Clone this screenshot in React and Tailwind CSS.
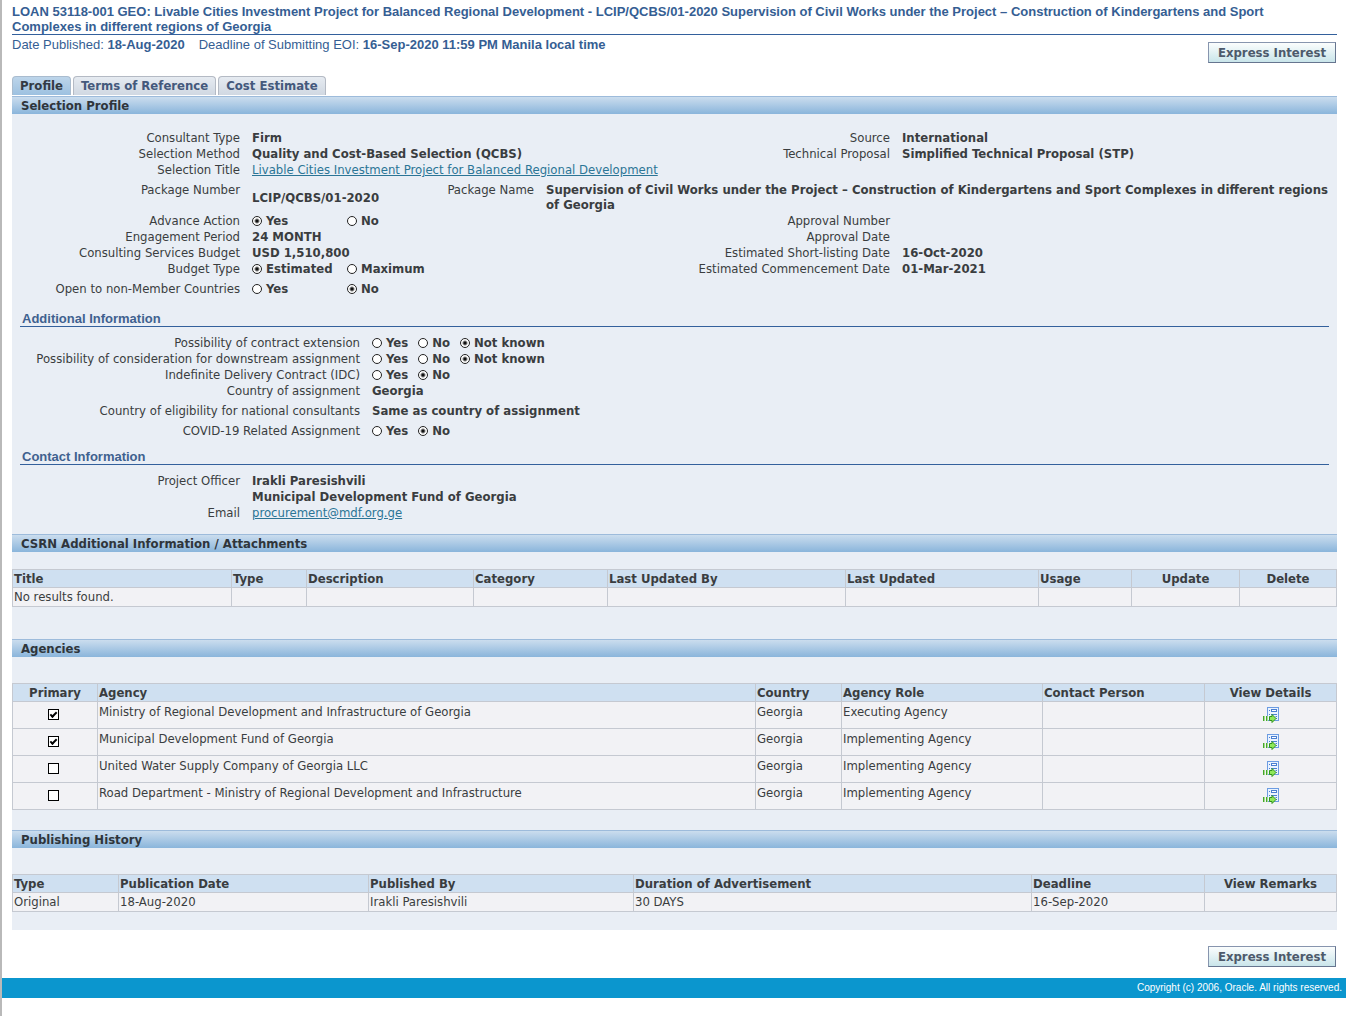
const attachmentColumns = [
  { name: "Title" },
  { name: "Type", width: "w-[75px]" },
  { name: "Description", width: "w-[167px]" },
  { name: "Category", width: "w-[134px]" },
  { name: "Last Updated By", width: "w-[238px]" },
  { name: "Last Updated", width: "w-[193px]" },
  { name: "Usage", width: "w-[93px]" },
  { name: "Update", width: "w-[108px]", center: true },
  { name: "Delete", width: "w-[97px]", center: true },
];

const agencyColumns = [
  { name: "Primary", width: "w-[85px]", center: true },
  { name: "Agency" },
  { name: "Country", width: "w-[86px]" },
  { name: "Agency Role", width: "w-[201px]" },
  { name: "Contact Person", width: "w-[162px]" },
  { name: "View Details", width: "w-[132px]", center: true },
];

const historyColumns = [
  { name: "Type", width: "w-[106px]" },
  { name: "Publication Date", width: "w-[250px]" },
  { name: "Published By", width: "w-[265px]" },
  { name: "Duration of Advertisement" },
  { name: "Deadline", width: "w-[173px]" },
  { name: "View Remarks", width: "w-[132px]", center: true },
];

const agencies = [
  { primary: true, name: "Ministry of Regional Development and Infrastructure of Georgia", country: "Georgia", role: "Executing Agency" },
  { primary: true, name: "Municipal Development Fund of Georgia", country: "Georgia", role: "Implementing Agency" },
  { primary: false, name: "United Water Supply Company of Georgia LLC", country: "Georgia", role: "Implementing Agency" },
  { primary: false, name: "Road Department - Ministry of Regional Development and Infrastructure", country: "Georgia", role: "Implementing Agency" },
];

const history = [
  ["Original", "18-Aug-2020", "Irakli Paresishvili", "30 DAYS", "16-Sep-2020", ""],
];

const cell = "border border-[#c5c9d1] px-px";

function ExpressButton() {
  return (
    <button
      type="button"
      className="h-[21px] w-[128px] border border-[#8795ae] border-r-[#66758f] border-b-[#66758f] bg-gradient-to-b from-[#fbfdfd] to-[#c9e5ea] font-bold leading-[18px] text-[#4d5a6b]"
    >
      Express Interest
    </button>
  );
}

function SectionBar({ children }) {
  return (
    <h2 className="h-[18px] border-t border-[#9dbbdb] bg-gradient-to-b from-[#cbddee] to-[#8ab5db] pl-[9px] font-bold leading-[18px] text-[#2f353b]">
      {children}
    </h2>
  );
}

function SubHeading({ children }) {
  return (
    <h3 className="mx-2 h-4 border-b border-[#33609c] pl-[2px] font-['Liberation_Sans',sans-serif] font-bold leading-[15px] text-[#3f618f]">
      {children}
    </h3>
  );
}

function RadioGroup({ name, options, selected, wide }) {
  return (
    <div role="radiogroup" aria-label={name} className={wide ? "grid grid-cols-[95px_auto] justify-start" : "flex gap-[10px]"}>
      {options.map((option) => (
        <label key={option} className="flex items-center gap-1 whitespace-nowrap font-bold">
          <input
            type="radio"
            name={name}
            defaultChecked={option === selected}
            className="size-[10px] shrink-0 appearance-none rounded-full border border-[#222] bg-white checked:bg-[radial-gradient(circle,#111_0_1px,#fff_3px)]"
          />
          {option}
        </label>
      ))}
    </div>
  );
}

// one label/value line; `wide` is used by the Additional Information block
function Row({ label, wide, children }) {
  return (
    <div className="flex gap-3">
      <div className={wide ? "w-[348px] text-right" : "w-[228px] text-right"}>{label}</div>
      <div className="font-bold">{children}</div>
    </div>
  );
}

function PairRow({ label, children, label2, value2 }) {
  return (
    <div className="grid min-h-4 grid-cols-[228px_minmax(0,1fr)_200px_435px] gap-x-3">
      <div className="text-right">{label}</div>
      <div className="whitespace-nowrap font-bold">{children}</div>
      <div className="text-right">{label2}</div>
      <div className="font-bold">{value2}</div>
    </div>
  );
}

function DataTable({ columns, children }) {
  return (
    <table className="w-full table-fixed border-collapse bg-[#f2f2f5]">
      <thead>
        <tr className="h-[18px] bg-[#cfe0f1]">
          {columns.map((col) => (
            <th
              key={col.name}
              scope="col"
              className={`${cell} ${col.width || ""} ${col.center ? "text-center" : "text-left"} leading-[17px]`}
            >
              {col.name}
            </th>
          ))}
        </tr>
      </thead>
      <tbody>{children}</tbody>
    </table>
  );
}

function DetailsIcon() {
  return (
    <svg width="16" height="16" viewBox="0 0 16 16" aria-hidden="true">
      <rect x="4.5" y="0.5" width="11" height="13" fill="#eaf3ff" stroke="#6c9ce2" />
      <path d="M6 3.5h1M6 7.5h1M12.5 9.5h1.500M12.500 11.500h1.500" stroke="#4a7fd2" />
      <rect x="8.5" y="2.5" width="5" height="2" fill="#fff" stroke="#4a7fd2" />
      <path d="M8 7.5h6" stroke="#4a7fd2" />
      <path d="M0.500 9v5M3.500 9v5" stroke="#45a52c" />
      <path d="M1.500 9v5M4.500 9v5" stroke="#a5dd8c" />
      <path d="M6.500 9.500h2.500V7.500L13 11.500 9 15.500v-2h-2.500z" fill="#8fe85a" stroke="#2f9419" />
    </svg>
  );
}

export default function App() {
  return (
    <div className="min-h-screen border-l-2 border-[#b9b9b9] bg-white font-['DejaVu_Sans_Condensed',sans-serif] text-[13px] leading-4 text-[#3a3d40]">
      <div className="pl-[10px] pr-[9px] pt-1">
        <header className="font-['Liberation_Sans',sans-serif] leading-[15px] text-[#355e93]">
          <h1 className="border-b border-[#33609c] pr-4 font-bold">
            LOAN 53118-001 GEO: Livable Cities Investment Project for Balanced Regional Development - LCIP/QCBS/01-2020 Supervision of Civil Works under the Project – Construction of Kindergartens and Sport Complexes in different regions of Georgia
          </h1>
          <div className="flex justify-between pr-px">
            <p className="pt-[2px]">
              Date Published: <b>18-Aug-2020</b>
              <span className="ml-[14px]">Deadline of Submitting EOI: <b>16-Sep-2020 11:59 PM Manila local time</b></span>
            </p>
            <div className="pt-[7px] font-['DejaVu_Sans_Condensed',sans-serif]">
              <ExpressButton />
            </div>
          </div>
        </header>

        <nav className="mt-[13px] flex gap-[2px] font-bold leading-[18px] text-[#44597c]">
          <a href="#profile" className="h-[19px] rounded-t border border-b-0 border-[#a9bccf] bg-gradient-to-b from-[#bdd5ea] to-[#9dc1e0] px-[7px] text-[#333b44]">Profile</a>
          <a href="#terms" className="h-[19px] rounded-t border border-b-0 border-[#b4bac4] bg-gradient-to-b from-[#e6ebf1] to-[#d0d8e2] px-[7px]">Terms of Reference</a>
          <a href="#cost" className="h-[19px] rounded-t border border-b-0 border-[#b4bac4] bg-gradient-to-b from-[#e6ebf1] to-[#d0d8e2] px-[7px]">Cost Estimate</a>
        </nav>

        <main className="mt-px bg-[#e9eef5] pb-[18px]">
          <SectionBar>Selection Profile</SectionBar>
          <div className="pt-4">
            <PairRow label="Consultant Type" label2="Source" value2="International">Firm</PairRow>
            <PairRow label="Selection Method" label2="Technical Proposal" value2="Simplified Technical Proposal (STP)">
              Quality and Cost-Based Selection (QCBS)
            </PairRow>
            <PairRow label="Selection Title">
              <a href="#project" className="font-normal text-[#2b7596] underline">
                Livable Cities Investment Project for Balanced Regional Development
              </a>
            </PairRow>
            <div className="mt-1 flex gap-x-3 leading-[15px]">
              <div className="w-[228px] text-right">Package Number</div>
              <div className="w-[180px] self-center font-bold">LCIP/QCBS/01-2020</div>
              <div className="w-[90px] text-right">Package Name</div>
              <div className="flex-1 font-bold">
                Supervision of Civil Works under the Project – Construction of Kindergartens and Sport Complexes in different regions of Georgia
              </div>
            </div>
            <div className="mt-px">
              <PairRow label="Advance Action" label2="Approval Number">
                <RadioGroup name="Advance Action" options={["Yes", "No"]} selected="Yes" wide />
              </PairRow>
              <PairRow label="Engagement Period" label2="Approval Date">24 MONTH</PairRow>
              <PairRow label="Consulting Services Budget" label2="Estimated Short-listing Date" value2="16-Oct-2020">
                USD 1,510,800
              </PairRow>
              <PairRow label="Budget Type" label2="Estimated Commencement Date" value2="01-Mar-2021">
                <RadioGroup name="Budget Type" options={["Estimated", "Maximum"]} selected="Estimated" wide />
              </PairRow>
            </div>
            <div className="mt-1">
              <PairRow label="Open to non-Member Countries">
                <RadioGroup name="Open to non-Member Countries" options={["Yes", "No"]} selected="No" wide />
              </PairRow>
            </div>
          </div>

          <div className="mt-[14px]">
            <SubHeading>Additional Information</SubHeading>
            <div className="pt-2">
              <Row wide label="Possibility of contract extension">
                <RadioGroup name="Contract extension" options={["Yes", "No", "Not known"]} selected="Not known" />
              </Row>
              <Row wide label="Possibility of consideration for downstream assignment">
                <RadioGroup name="Downstream assignment" options={["Yes", "No", "Not known"]} selected="Not known" />
              </Row>
              <Row wide label="Indefinite Delivery Contract (IDC)">
                <RadioGroup name="Indefinite Delivery Contract" options={["Yes", "No"]} selected="No" />
              </Row>
              <Row wide label="Country of assignment">Georgia</Row>
              <div className="flex flex-col gap-1 pt-1">
                <Row wide label="Country of eligibility for national consultants">Same as country of assignment</Row>
                <Row wide label="COVID-19 Related Assignment">
                  <RadioGroup name="COVID-19 Related Assignment" options={["Yes", "No"]} selected="No" />
                </Row>
              </div>
            </div>
          </div>

          <div className="mt-[10px]">
            <SubHeading>Contact Information</SubHeading>
            <div className="pt-2">
              <Row label="Project Officer">
                <p>Irakli Paresishvili</p>
                <p>Municipal Development Fund of Georgia</p>
              </Row>
              <Row label="Email">
                <a href="mailto:procurement@mdf.org.ge" className="font-normal text-[#2b7596] underline">procurement@mdf.org.ge</a>
              </Row>
            </div>
          </div>

          <section className="mt-[13px]">
            <SectionBar>CSRN Additional Information / Attachments</SectionBar>
            <div className="pt-[17px]">
              <DataTable columns={attachmentColumns}>
                <tr className="h-[19px]">
                  {attachmentColumns.map((col, i) => (
                    <td key={col.name} className={cell}>{i === 0 ? "No results found." : ""}</td>
                  ))}
                </tr>
              </DataTable>
            </div>
          </section>

          <section className="mt-8">
            <SectionBar>Agencies</SectionBar>
            <div className="pt-[26px]">
              <DataTable columns={agencyColumns}>
                {agencies.map((agency) => (
                  <tr key={agency.name} className="h-[27px] align-top">
                    <td className="border border-[#c5c9d1] pr-1 pt-[7px]">
                      <input
                        type="checkbox"
                        aria-label={`Primary: ${agency.name}`}
                        defaultChecked={agency.primary}
                        className="mx-auto grid size-[11px] appearance-none place-items-center border border-black bg-white before:mb-[2px] before:hidden before:h-[4px] before:w-[7px] before:-rotate-45 before:border-b-2 before:border-l-2 before:border-black checked:before:block"
                      />
                    </td>
                    <td className={`${cell} pt-[2px]`}>{agency.name}</td>
                    <td className={`${cell} pt-[2px]`}>{agency.country}</td>
                    <td className={`${cell} pt-[2px]`}>{agency.role}</td>
                    <td className={cell}></td>
                    <td className={`${cell} pt-[5px]`}>
                      <a href="#details" aria-label={`View details of ${agency.name}`} className="flex justify-center">
                        <DetailsIcon />
                      </a>
                    </td>
                  </tr>
                ))}
              </DataTable>
            </div>
          </section>

          <section className="mt-5">
            <SectionBar>Publishing History</SectionBar>
            <div className="pt-[26px]">
              <DataTable columns={historyColumns}>
                {history.map((row) => (
                  <tr key={row[1]} className="h-[19px]">
                    {row.map((value, i) => (
                      <td key={historyColumns[i].name} className={cell}>{value}</td>
                    ))}
                  </tr>
                ))}
              </DataTable>
            </div>
          </section>
        </main>

        <div className="flex justify-end pr-px pt-4">
          <ExpressButton />
        </div>
      </div>

      <footer className="mt-[11px] h-5 bg-[#0b96ce] pr-1 text-right font-['Liberation_Sans',sans-serif] text-[10px] leading-5 text-white">
        Copyright (c) 2006, Oracle. All rights reserved.
      </footer>
    </div>
  );
}
